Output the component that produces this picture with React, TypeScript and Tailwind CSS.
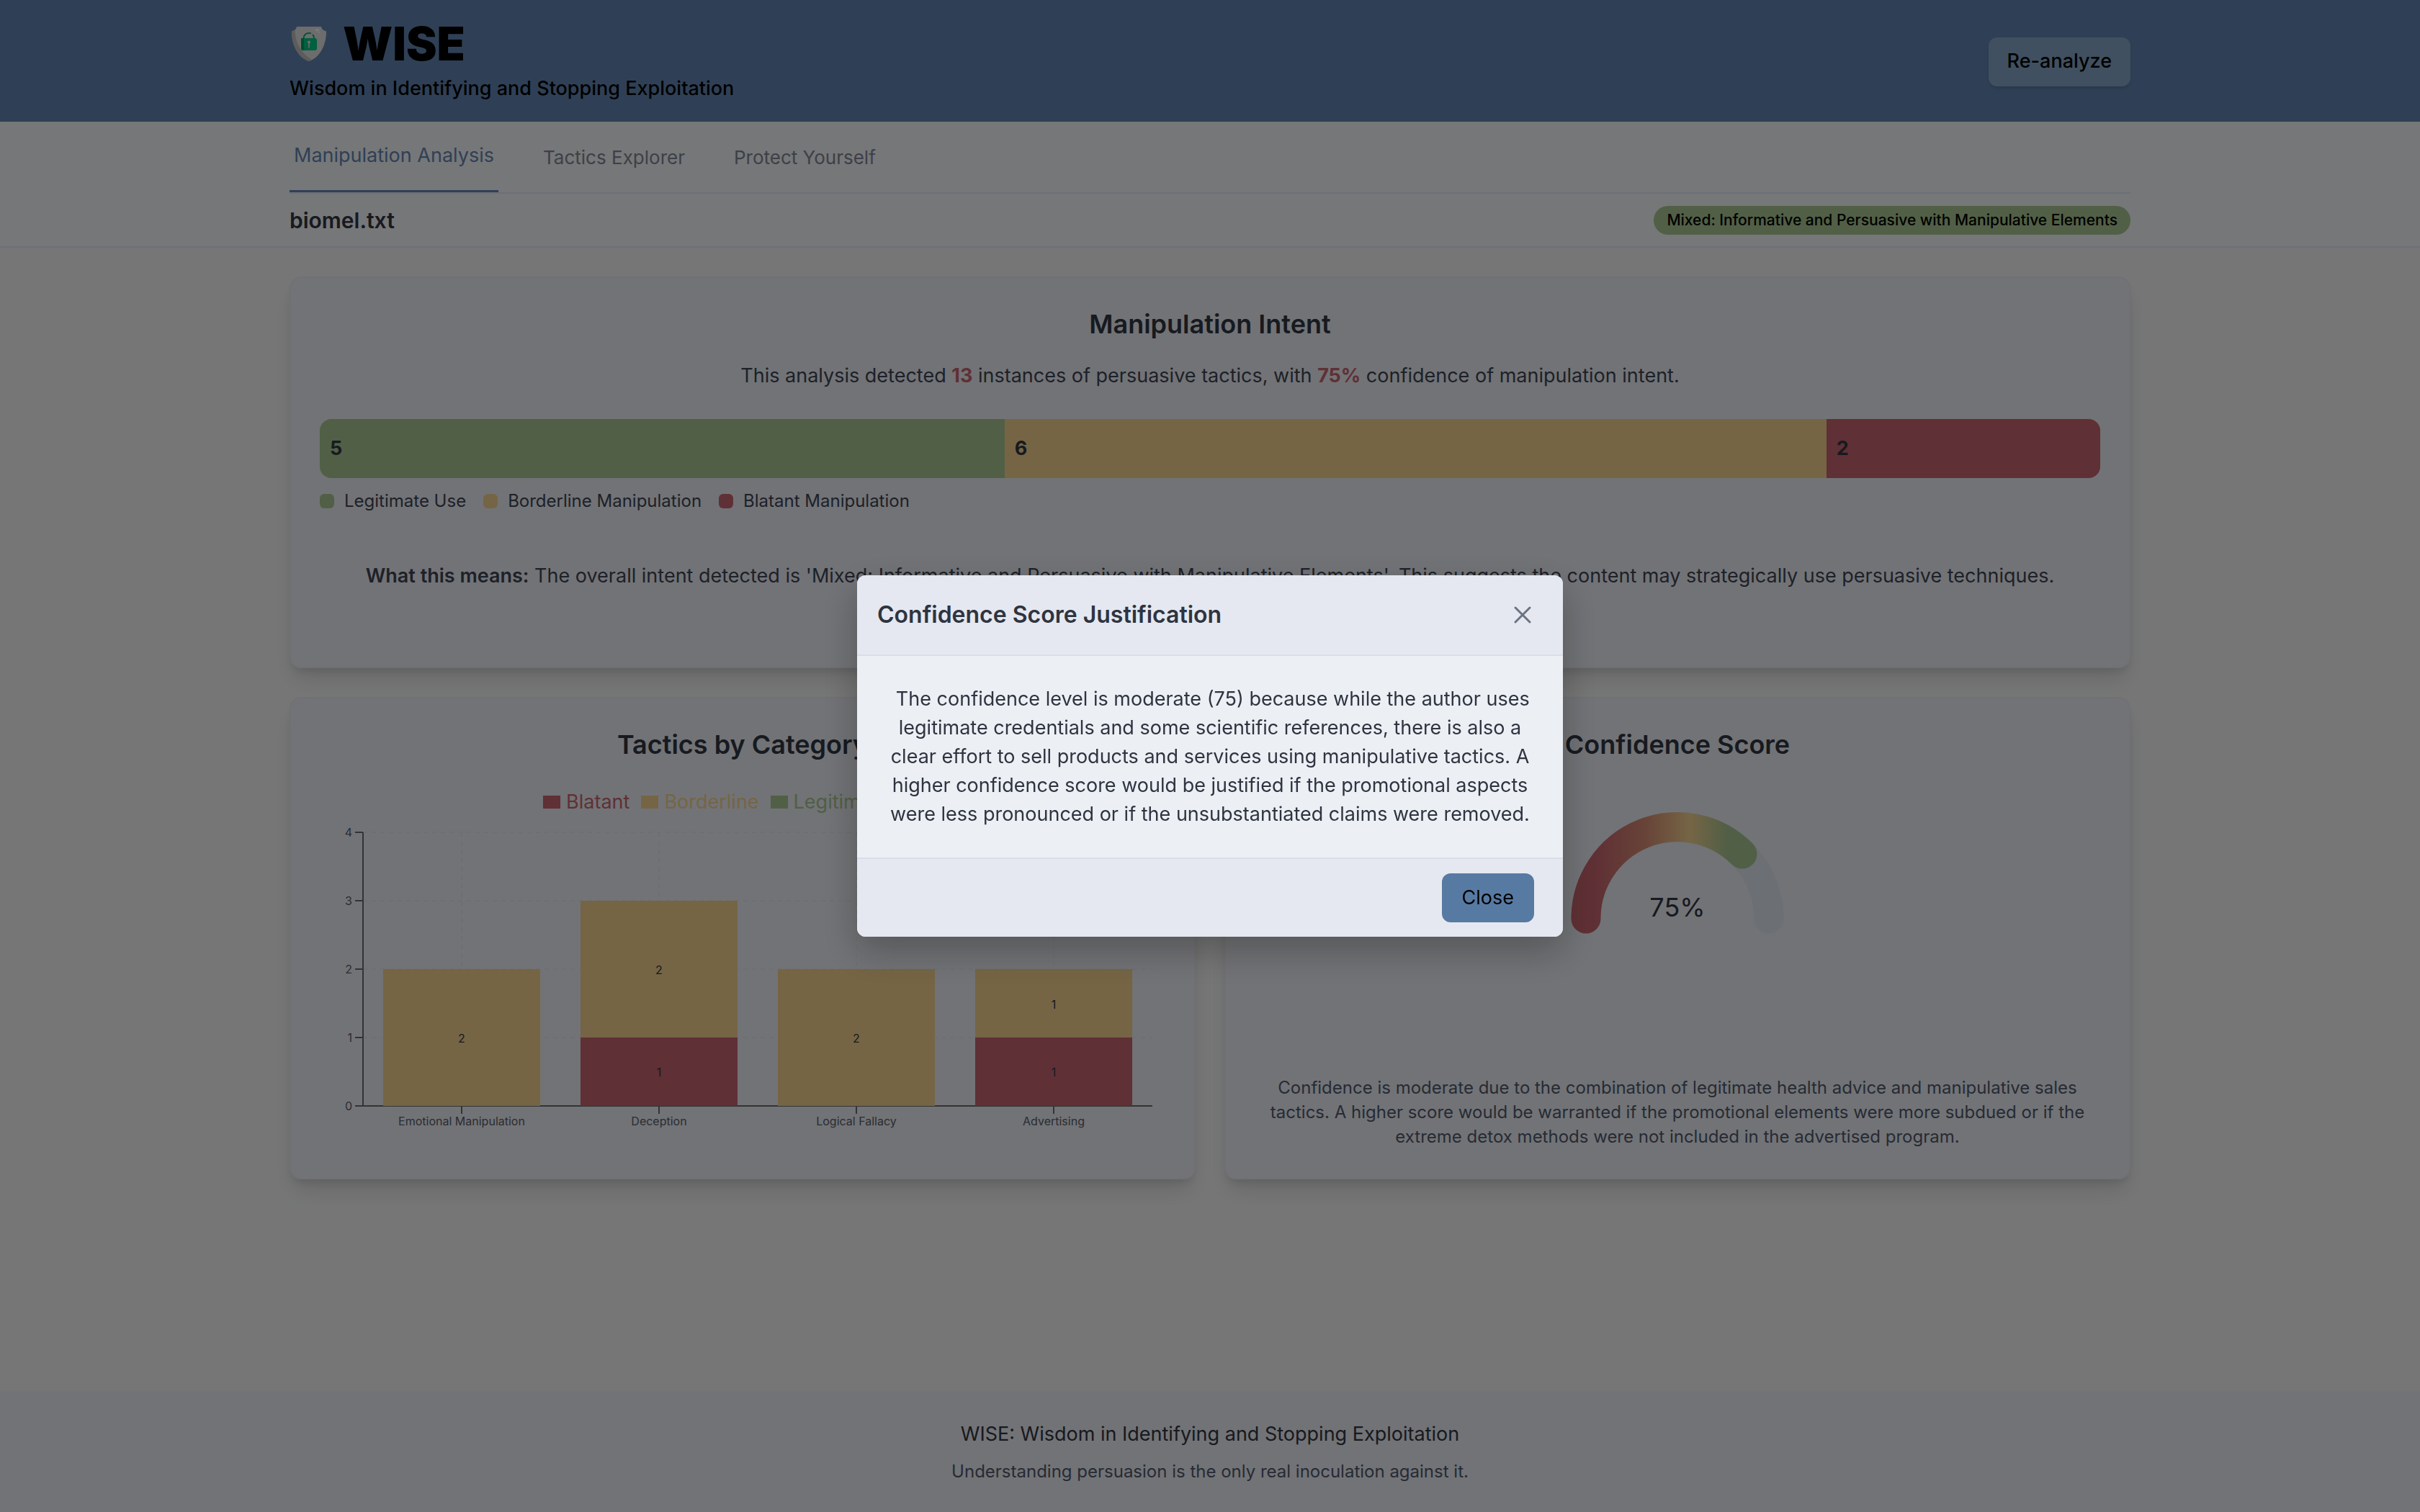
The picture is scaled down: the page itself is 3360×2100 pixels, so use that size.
import { useState } from "react";
import type { ReactNode } from "react";

const CARD =
  "rounded-2xl border-2 border-[#dfe2ea] bg-[#e4e6ec] shadow-[0_20px_30px_-6px_rgba(0,0,0,0.12),0_8px_12px_-4px_rgba(0,0,0,0.1)]";

const TABS = ["Manipulation Analysis", "Tactics Explorer", "Protect Yourself"];

const INTENT = [
  { label: "Legitimate Use", count: 5, color: "bg-[#a3be8c]" },
  { label: "Borderline Manipulation", count: 6, color: "bg-[#ebcb8b]" },
  { label: "Blatant Manipulation", count: 2, color: "bg-[#bf616a]" },
];

const TOTAL = INTENT.reduce((sum, s) => sum + s.count, 0);

const CATEGORIES = [
  { name: "Emotional Manipulation", blatant: 0, borderline: 2 },
  { name: "Deception", blatant: 1, borderline: 2 },
  { name: "Logical Fallacy", blatant: 0, borderline: 2 },
  { name: "Advertising", blatant: 1, borderline: 1 },
];

const SERIES = [
  { label: "Blatant", box: "bg-[#bf616a]", text: "text-[#bf616a]" },
  { label: "Borderline", box: "bg-[#ebcb8b]", text: "text-[#ebcb8b]" },
  { label: "Legitimate Use", box: "bg-[#a3be8c]", text: "text-[#a3be8c]" },
];

function ShieldLogo() {
  return (
    <svg viewBox="-3 0 54 48" className="h-12 w-[54px]" aria-hidden="true">
      <path d="M7 0h34c.5 3.500 3 5.500 7 6.500C48 26 39 43 24 48 9 43 0 26 0 6.500 4 5.500 6.500 3.500 7 0z" fill="#dadada" />
      <path d="M0 6.500 4.500 4.500C5 22 12 36 28 46l-4 2C9 43 0 26 0 6.500z" fill="#b8b8b8" />
      <path d="M16.500 17v-1a7.500 7.500 0 0 1 10.500-6.500M29 11a7 7 0 0 1 2 5v1" fill="none" stroke="#00a566" strokeWidth="1.800" />
      <rect x="13" y="16" width="22" height="17" rx="3" fill="#00c07e" />
      <path d="M13 16h4v14c0 1.500.5 2.500 1.500 3H16a3 3 0 0 1-3-3z" fill="#009a60" />
      <circle cx="24" cy="21.500" r="2" fill="#dadada" />
      <path d="M23.200 22h1.600v7.500h-1.600z" fill="#dadada" />
      <ellipse cx="35.500" cy="5" rx="3" ry="1.400" fill="#f8f8f8" />
      <circle cx="38" cy="8" r="1" fill="#f8f8f8" />
    </svg>
  );
}

function CategoryChart() {
  const left = 60;
  const base = 402;
  const unit = 95;
  const band = 274;
  return (
    <svg
      viewBox="0 0 1174 450"
      className="w-full font-['Inter',sans-serif] text-[16px]"
      role="img"
      aria-label="Tactics by category"
    >
      <g stroke="#dcdfe7" strokeWidth="2" strokeDasharray="6 6">
        {[1, 2, 3, 4].map((n) => (
          <line key={n} x1={left} x2={left + band * 4} y1={base - n * unit} y2={base - n * unit} />
        ))}
        {CATEGORIES.map((c, i) => (
          <line key={c.name} x1={left + band * (i + 0.5)} x2={left + band * (i + 0.5)} y1={base - 4 * unit} y2={base} />
        ))}
      </g>
      <g stroke="#666" strokeWidth="2">
        <line x1={left} x2={left} y1={base - 4 * unit} y2={base} />
        <line x1={left} x2={left + band * 4} y1={base} y2={base} />
        {[0, 1, 2, 3, 4].map((n) => (
          <line key={n} x1={left - 11} x2={left} y1={base - n * unit} y2={base - n * unit} />
        ))}
        {CATEGORIES.map((c, i) => (
          <line key={c.name} x1={left + band * (i + 0.5)} x2={left + band * (i + 0.5)} y1={base} y2={base + 11} />
        ))}
      </g>
      {[0, 1, 2, 3, 4].map((n) => (
        <text key={n} x={left - 15} y={base - n * unit + 6} textAnchor="end" fill="#555a66">
          {n}
        </text>
      ))}
      {CATEGORIES.map((c, i) => {
        const mid = left + band * (i + 0.5);
        const split = base - c.blatant * unit;
        return (
          <g key={c.name}>
            {c.blatant > 0 && (
              <>
                <rect x={mid - 109} y={split} width="218" height={c.blatant * unit} fill="#bf616a" />
                <text x={mid} y={split + (c.blatant * unit) / 2 + 6} textAnchor="middle" fill="#2e3440">
                  {c.blatant}
                </text>
              </>
            )}
            <rect x={mid - 109} y={split - c.borderline * unit} width="218" height={c.borderline * unit} fill="#ebcb8b" />
            <text x={mid} y={split - (c.borderline * unit) / 2 + 7} textAnchor="middle" fill="#2e3440">
              {c.borderline}
            </text>
            <text x={mid} y={base + 27} textAnchor="middle" fill="#555a66">
              {c.name}
            </text>
          </g>
        );
      })}
    </svg>
  );
}

function Gauge() {
  return (
    <svg
      viewBox="0 0 300 172"
      className="h-[172px] w-[300px] font-['Inter',sans-serif] text-[36px]"
      role="img"
      aria-label="Confidence 75%"
    >
      <defs>
        <linearGradient id="gauge" gradientUnits="userSpaceOnUse" x1="2" x2="260" y1="0" y2="0">
          <stop offset="0.14" stopColor="#bf616a" />
          <stop offset="0.4" stopColor="#d08770" />
          <stop offset="0.64" stopColor="#ebcb8b" />
          <stop offset="0.84" stopColor="#a3be8c" />
        </linearGradient>
      </defs>
      <path d="M23 150a127 127 0 0 1 254 0" fill="none" stroke="#d8dee9" strokeWidth="41" strokeLinecap="round" />
      <path d="M23 150A127 127 0 0 1 240 60" fill="none" stroke="url(#gauge)" strokeWidth="41" strokeLinecap="round" />
      <text x="150" y="147" textAnchor="middle" fill="#2e3440">
        75%
      </text>
    </svg>
  );
}

function CardTitle({ children }: { children: ReactNode }) {
  return <h2 className="text-center text-[36px] leading-[48px] font-semibold text-[#2e3440]">{children}</h2>;
}

function JustificationDialog({ onClose }: { onClose: () => void }) {
  return (
    <div className="fixed inset-0 z-10 flex items-center justify-center bg-black/50">
      <div
        role="dialog"
        aria-modal="true"
        aria-labelledby="dialog-title"
        className="w-[980px] overflow-hidden rounded-xl bg-[#eceff4] shadow-[0_20px_50px_rgba(0,0,0,0.25)]"
      >
        <div className="flex h-28 items-center justify-between border-b-2 border-[#d8dee9] bg-[#e5e8f0] pr-10 pl-7">
          <h3 id="dialog-title" className="text-[32px] leading-10 font-semibold text-[#2e3440]">
            Confidence Score Justification
          </h3>
          <button type="button" aria-label="Dismiss" onClick={onClose} className="text-[#6b7280]">
            <svg viewBox="0 0 32 32" className="size-8" fill="none" stroke="currentColor" strokeWidth="3" strokeLinecap="round">
              <path d="M6 6l20 20M26 6L6 26" />
            </svg>
          </button>
        </div>
        <div className="px-10 py-10">
          <p className="text-center text-[27px] leading-10 text-[#2e3440]">
            {"\u00a0"}The confidence level is moderate (75) because while the author uses legitimate credentials and
            some scientific references, there is also a clear effort to sell products and services using manipulative
            tactics. A higher confidence score would be justified if the promotional aspects were less pronounced or if
            the unsubstantiated claims were removed.
          </p>
        </div>
        <div className="flex justify-end border-t-2 border-[#d8dee9] bg-[#e5e8f0] px-10 py-5">
          <button
            type="button"
            onClick={onClose}
            className="h-[68px] rounded-xl bg-[#577aa3] px-7 text-[27px] leading-9 text-black"
          >
            Close
          </button>
        </div>
      </div>
    </div>
  );
}

export default function App() {
  const [open, setOpen] = useState(true);
  const [tab, setTab] = useState(0);
  return (
    <div className="flex min-h-screen flex-col bg-[#edeef0] font-['Inter',sans-serif] text-[#2e3440]">
      <header className="bg-[#5e81ac] px-[402px]">
        <div className="flex items-center justify-between pt-7 pb-[26px]">
          <div>
            <div className="flex items-center gap-5 text-black">
              <ShieldLogo />
              <h1 className="text-[64px] leading-[66px] font-black">WISE</h1>
            </div>
            <p className="mt-[9px] text-[27px] leading-10 font-medium text-black">
              Wisdom in Identifying and Stopping Exploitation
            </p>
          </div>
          <button
            type="button"
            onClick={() => setOpen(true)}
            className="h-[68px] rounded-xl bg-[#81a1c1] px-[26px] text-[27px] font-medium text-black shadow-md"
          >
            Re-analyze
          </button>
        </div>
      </header>

      <div className="border-b-2 border-[#d8dee9] px-[402px] shadow-sm">
        <nav className="flex gap-14 border-b-2 border-[#d8dee9]">
          {TABS.map((t, i) => (
            <button
              key={t}
              type="button"
              onClick={() => setTab(i)}
              className={
                i === tab
                  ? "h-[98px] border-b-3 border-[#5e81ac] px-1.5 text-[27px] text-[#5e81ac]"
                  : "h-[98px] px-1.5 text-[26px] text-[#7b8190]"
              }
            >
              {t}
            </button>
          ))}
        </nav>
        <div className="flex h-[73px] items-center justify-between">
          <h2 className="text-[30px] leading-10 font-semibold">biomel.txt</h2>
          <span className="rounded-full bg-[#a3be8c] px-[18px] text-[21px] leading-10 font-medium text-black">
            Mixed: Informative and Persuasive with Manipulative Elements
          </span>
        </div>
      </div>

      <main className="flex flex-1 flex-col gap-10 bg-[#ecedee] px-[402px] pt-10">
        <section className={`${CARD} px-10 pt-10 pb-[106px] text-center`}>
          <CardTitle>Manipulation Intent</CardTitle>
          <p className="mt-7 text-[27px] leading-10 text-[#3b4252]">
            This analysis detected <b className="text-[#bf616a]">13</b> instances of persuasive tactics, with{" "}
            <b className="text-[#bf616a]">75%</b> confidence of manipulation intent.
          </p>
          <div className="mt-10 flex h-[82px] overflow-hidden rounded-2xl">
            {INTENT.map((s) => (
              <div
                key={s.label}
                className={`${s.color} flex items-center px-3.5 text-[27px] font-bold`}
                style={{ width: `${(s.count / TOTAL) * 100}%` }}
              >
                {s.count}
              </div>
            ))}
          </div>
          <ul className="mt-3 flex gap-6 text-[24px] leading-10 text-[#3b4252]">
            {INTENT.map((s) => (
              <li key={s.label} className="flex items-center gap-3.5">
                <span className={`${s.color} size-5 rounded-md`} />
                {s.label}
              </li>
            ))}
          </ul>
          <p className="mt-16 text-[27px] leading-10 text-[#3b4252]">
            <b className="font-semibold">What this means:</b> The overall intent detected is &apos;Mixed: Informative
            and Persuasive with Manipulative Elements&apos;. This suggests the content may strategically use persuasive
            techniques.
          </p>
        </section>

        <div className="grid grid-cols-2 gap-10">
          <section className={`${CARD} px-10 pt-10 pb-13`}>
            <CardTitle>Tactics by Category</CardTitle>
            <ul className="mt-9 flex justify-center gap-4 pr-4 text-[27px] leading-10">
              {SERIES.map((s) => (
                <li key={s.label} className={`${s.text} flex items-center gap-2`}>
                  <span className={`${s.box} h-[18px] w-6`} />
                  {s.label}
                </li>
              ))}
            </ul>
            <CategoryChart />
          </section>
          <section className={`${CARD} flex flex-col items-center px-14 pt-10 pb-10`}>
            <CardTitle>Confidence Score</CardTitle>
            <div className="mt-17 flex-1">
              <Gauge />
            </div>
            <p className="text-center text-[24px] leading-[34px] text-[#4c566a]">
              Confidence is moderate due to the combination of legitimate health advice and manipulative sales tactics. A
              higher score would be warranted if the promotional elements were more subdued or if the extreme detox
              methods were not included in the advertised program.
            </p>
          </section>
        </div>
      </main>

      <footer className="bg-[#e4e6ec] pt-10 pb-9 text-center">
        <p className="text-[27px] leading-10">WISE: Wisdom in Identifying and Stopping Exploitation</p>
        <p className="mt-3 text-[24px] leading-10 text-[#4c566a]">
          Understanding persuasion is the only real inoculation against it.
        </p>
      </footer>

      {open && <JustificationDialog onClose={() => setOpen(false)} />}
    </div>
  );
}
